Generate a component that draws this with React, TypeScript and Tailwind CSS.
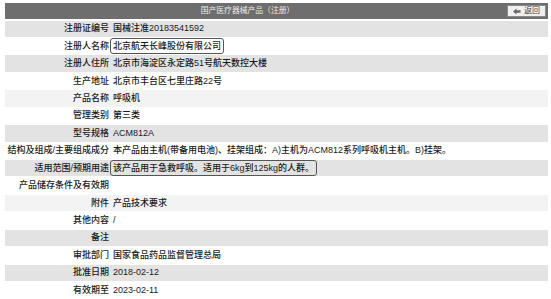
import { FunctionComponent } from "react";

interface Row {
    label: string;
    value: string;
    bg: string;
    boxed?: boolean;
}

const rows: Row[] = [
    { label: "注册证编号", value: "国械注准20183541592", bg: "bg-[#e3e3e3]" },
    { label: "注册人名称", value: "北京航天长峰股份有限公司", bg: "bg-white", boxed: true },
    { label: "注册人住所", value: "北京市海淀区永定路51号航天数控大楼", bg: "bg-[#e3e3e3]" },
    { label: "生产地址", value: "北京市丰台区七里庄路22号", bg: "bg-white" },
    { label: "产品名称", value: "呼吸机", bg: "bg-[#f3f3f3]" },
    { label: "管理类别", value: "第三类", bg: "bg-white" },
    { label: "型号规格", value: "ACM812A", bg: "bg-[#e3e3e3]" },
    {
        label: "结构及组成/主要组成成分",
        value: "本产品由主机(带备用电池)、挂架组成：A)主机为ACM812系列呼吸机主机。B)挂架。",
        bg: "bg-white",
    },
    {
        label: "适用范围/预期用途",
        value: "该产品用于急救呼吸。适用于6kg到125kg的人群。",
        bg: "bg-[#e3e3e3]",
        boxed: true,
    },
    { label: "产品储存条件及有效期", value: "", bg: "bg-white" },
    { label: "附件", value: "产品技术要求", bg: "bg-[#f3f3f3]" },
    { label: "其他内容", value: "/", bg: "bg-white" },
    { label: "备注", value: "", bg: "bg-[#e3e3e3]" },
    { label: "审批部门", value: "国家食品药品监督管理总局", bg: "bg-white" },
    { label: "批准日期", value: "2018-02-12", bg: "bg-[#e3e3e3]" },
    { label: "有效期至", value: "2023-02-11", bg: "bg-white" },
];

const App: FunctionComponent = () => {
    return (
        <div
            className="w-[551px] h-[299px] bg-white pt-[3px] pl-[5px] pr-[3px] overflow-hidden text-[#1a1a1a]"
            style={{ fontFamily: '"Liberation Sans", "Noto Sans CJK SC", sans-serif' }}
        >
            <div className="h-[16px] bg-[#6e6e6e] flex items-center">
                <div className="flex-1 text-center text-[7.8px] text-[#ececec] leading-none">
                    国产医疗器械产品（注册）
                </div>
                <div className="w-[58px] flex justify-end pr-[2px]">
                    <div className="w-[39px] h-[12px] bg-[#efefef] border border-[#8a8a8a] flex items-center justify-center gap-[3px]">
                        <svg width="8" height="7" viewBox="0 0 8 7">
                            <path d="M0 3.5 L3.5 0.5 V2.3 H7.5 V4.7 H3.5 V6.5 Z" fill="#666" />
                        </svg>
                        <span className="text-[8px] leading-none text-[#444]">返回</span>
                    </div>
                </div>
            </div>
            <div className="mt-[0.5px] flex flex-col">
                {rows.map((r) => (
                    <div key={r.label} className={`h-[17.45px] flex items-center border-t border-white ${r.bg}`}>
                        <div className="w-[104px] text-right text-[9px] font-medium whitespace-nowrap leading-none">
                            {r.label}
                        </div>
                        {r.boxed ? (
                            <div className="ml-[1px] h-[16px] px-[2px] flex items-center border-[1.5px] border-[#555] rounded-[3px] text-[9px] font-medium whitespace-nowrap leading-none">
                                {r.value}
                            </div>
                        ) : (
                            <div className="pl-[4px] text-[9px] font-medium whitespace-nowrap leading-none">
                                {r.value}
                            </div>
                        )}
                    </div>
                ))}
            </div>
        </div>
    );
};

export default App;
